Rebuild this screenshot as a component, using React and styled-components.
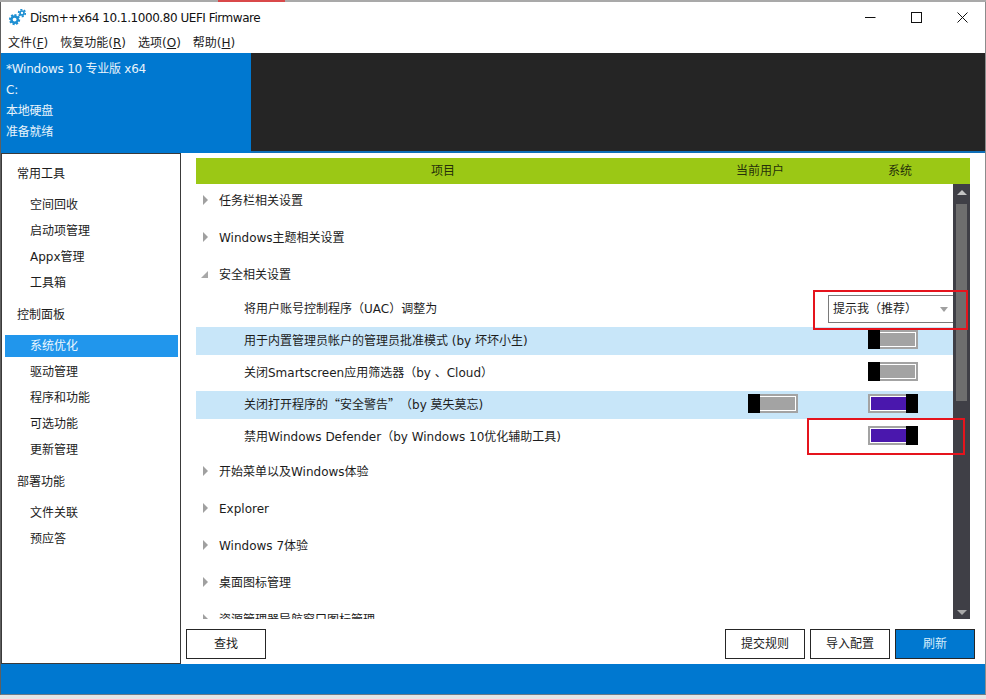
import React from "react";
import styled, { createGlobalStyle } from "styled-components";

const GlobalStyle = createGlobalStyle`
  html, body {
    margin: 0;
    padding: 0;
    background: #e6e6e6;
    overflow: hidden;
  }
`;

const fontStack = `"DejaVu Sans", "Noto Sans CJK SC", sans-serif`;

const Page = styled.div`
  width: 986px;
  height: 699px;
  display: flex;
  flex-direction: column;
  font-family: ${fontStack};
  font-size: 12px;
  color: #1c1c1c;
  box-sizing: border-box;
`;

const TopStrip = styled.div`
  height: 2px;
  background: #a9a9a9;
  display: flex;
  flex-shrink: 0;
  span {
    width: 67px;
    margin-left: 218px;
    background: #d9484a;
  }
`;

const Window = styled.div`
  height: 693px;
  display: flex;
  flex-direction: column;
  background: #fff;
  border-left: 1px solid #5f5f5f;
  border-right: 1px solid #8c8c8c;
  border-bottom: 1px solid #6c7c88;
  box-sizing: border-box;
`;

const TitleBar = styled.div`
  height: 28px;
  display: flex;
  align-items: center;
  padding: 3px 0 0 8px;
  box-sizing: border-box;
  flex-shrink: 0;
`;

const TitleText = styled.div`
  margin-left: 4px;
  letter-spacing: -0.45px;
  color: #111;
`;

const WinButtons = styled.div`
  margin-left: auto;
  display: flex;
  align-items: center;
`;

const WinButton = styled.div`
  width: 46px;
  height: 25px;
  display: flex;
  align-items: center;
  justify-content: center;
`;

const MenuBar = styled.div`
  height: 23px;
  display: flex;
  align-items: center;
  gap: 12px;
  padding-left: 7px;
  flex-shrink: 0;
  u {
    text-underline-offset: 1px;
  }
`;

const Header = styled.div`
  height: 100px;
  display: flex;
  flex-shrink: 0;
  background: #252525;
  border-bottom: 2px solid #0f6fb8;
  box-sizing: border-box;
`;

const Info = styled.div`
  width: 250px;
  margin-bottom: -2px;
  background: #0078d0;
  color: #e8f3fb;
  padding: 6px 0 0 5px;
  box-sizing: border-box;
  letter-spacing: -0.25px;
  div {
    height: 21px;
    line-height: 21px;
  }
`;

const Body = styled.div`
  flex: 1;
  display: flex;
  min-height: 0;
`;

const Sidebar = styled.nav`
  width: 180px;
  flex-shrink: 0;
  background: #fff;
  border: 1px solid #3a3a3a;
  box-sizing: border-box;
  padding: 7px 2px 0 3px;
`;

const NavSection = styled.div`
  display: flex;
  flex-direction: column;
`;

const NavGroup = styled.div`
  height: 26px;
  line-height: 26px;
  padding-left: 12px;
  margin: ${(p) => (p.$first ? "0" : "6px")} 0 5px;
`;

const NavItem = styled.div`
  height: ${(p) => (p.$active ? "22px" : "26px")};
  line-height: ${(p) => (p.$active ? "22px" : "26px")};
  margin: ${(p) => (p.$active ? "2px 0" : "0")};
  padding-left: 25px;
  background: ${(p) => (p.$active ? "#2196ec" : "transparent")};
  color: ${(p) => (p.$active ? "#eaf6ff" : "#1c1c1c")};
`;

const Main = styled.main`
  flex: 1;
  min-width: 0;
  display: flex;
  flex-direction: column;
  padding: 5px 10px 5px 5px;
`;

const TableHead = styled.div`
  height: 26px;
  margin: 0 5px 0 10px;
  display: grid;
  grid-template-columns: 494px 140px 140px;
  background: #9bc815;
  color: #26300a;
  flex-shrink: 0;
  line-height: 26px;
  text-align: center;
`;

const ListWrap = styled.div`
  height: 435px;
  margin: 0 5px 0 10px;
  display: flex;
  flex-shrink: 0;
  overflow: hidden;
`;

const Tree = styled.div`
  flex: 1;
  min-width: 0;
`;

const Group = styled.div`
  height: 32px;
  margin-bottom: 5px;
  display: flex;
  align-items: center;
`;

const GroupLabel = styled.span`
  line-height: 30px;
  margin-top: 2px;
`;

const Caret = styled.span`
  width: 0;
  height: 0;
  margin-left: ${(p) => (p.$open ? "5px" : "7px")};
  margin-right: 11px;
  border-style: solid;
  ${(p) =>
    p.$open
      ? `border-width: 0 0 7px 7px; border-color: transparent transparent #a8a8a8 transparent;`
      : `border-width: 5px 0 5px 5px; border-color: transparent transparent transparent #a0a0a0;`}
`;

const Row = styled.div`
  height: 28px;
  margin-bottom: 4px;
  padding: 0 35px 0 48px;
  display: grid;
  grid-template-columns: 1fr 50px 50px;
  column-gap: 70px;
  align-items: center;
  background: ${(p) => (p.$shaded ? "#c8e6f9" : "transparent")};
`;

const RowLabel = styled.div`
  margin-bottom: 3px;
  white-space: nowrap;
`;

const Quoted = styled.span`
  font-family: "Noto Sans CJK SC", sans-serif;
  padding-right: 6px;
`;

const Toggle = styled.div`
  position: relative;
  grid-column: ${(p) => p.$col};
  grid-row: 1;
  height: 19px;
  margin-bottom: 3px;
  box-sizing: border-box;
  border: 2px solid #a3a3a3;
  box-shadow: inset 0 0 0 1px #fff;
  background: ${(p) => (p.$on ? "#4a17ad" : "#a3a3a3")};
  &::after {
    content: "";
    position: absolute;
    top: -2px;
    ${(p) => (p.$on ? "right: -2px;" : "left: -2px;")}
    width: 12px;
    height: 19px;
    background: #000;
  }
`;

const Combo = styled.div`
  grid-column: 2 / -1;
  justify-self: end;
  width: 125px;
  height: 28px;
  margin-right: -35px;
  box-sizing: border-box;
  border: 1px solid #7a7a7a;
  border-right: 0;
  background: #fff;
  display: flex;
  align-items: center;
  justify-content: space-between;
  padding: 0 5px 3px 4px;
  i {
    width: 0;
    height: 0;
    margin-top: 3px;
    border-style: solid;
    border-width: 5px 4px 0 4px;
    border-color: #a0a0a0 transparent transparent transparent;
  }
`;

const Scrollbar = styled.div`
  width: 17px;
  flex-shrink: 0;
  background: #3f3f46;
  display: flex;
  flex-direction: column;
  align-items: center;
  padding-top: 6px;
  box-sizing: border-box;
`;

const ScrollUp = styled.i`
  width: 0;
  height: 0;
  border-style: solid;
  border-width: 0 5px 5px 5px;
  border-color: transparent transparent #c4c4c4 transparent;
`;

const ScrollDown = styled.i`
  width: 0;
  height: 0;
  margin-top: auto;
  margin-bottom: 4px;
  border-style: solid;
  border-width: 5px 5px 0 5px;
  border-color: #a8a8a8 transparent transparent transparent;
`;

const Thumb = styled.div`
  width: 11px;
  height: 197px;
  margin-top: 9px;
  background: #6e6e6e;
`;

const Actions = styled.div`
  margin-top: 10px;
  display: flex;
  gap: 5px;
  flex-shrink: 0;
`;

const Button = styled.div`
  width: 80px;
  height: 30px;
  line-height: 28px;
  box-sizing: border-box;
  text-align: center;
  border: 1px solid #262626;
  background: ${(p) => (p.$primary ? "#0078d0" : "#fff")};
  color: ${(p) => (p.$primary ? "#d8edfb" : "#1c1c1c")};
  &:first-child {
    margin-right: auto;
  }
`;

const Footer = styled.div`
  height: 30px;
  background: #0078d0;
  flex-shrink: 0;
`;

const Mark = styled.div`
  position: absolute;
  left: ${(p) => p.$x}px;
  top: ${(p) => p.$y}px;
  width: ${(p) => p.$w}px;
  height: ${(p) => p.$h}px;
  box-sizing: border-box;
  border: 2px solid #e5141d;
  pointer-events: none;
`;

const Gear = ({ cx, cy, r, w }) => (
  <g fill="none">
    <circle cx={cx} cy={cy} r={r + 1} stroke="#1e8fd2" strokeWidth={w} strokeDasharray="2 1.5" />
    <circle cx={cx} cy={cy} r={r - 0.4} stroke="#1e8fd2" strokeWidth={r * 0.7} />
  </g>
);

const AppIcon = () => (
  <svg width="17" height="17" viewBox="0 0 17 17">
    <Gear cx={5.6} cy={10.6} r={3.6} w={2} />
    <Gear cx={13} cy={4} r={2.4} w={1.6} />
  </svg>
);

const groupsTop = ["任务栏相关设置", "Windows主题相关设置"];
const groupsBottom = ["开始菜单以及Windows体验", "Explorer", "Windows 7体验", "桌面图标管理", "资源管理器导航窗口图标管理"];

const nav = [
  { title: "常用工具", items: ["空间回收", "启动项管理", "Appx管理", "工具箱"] },
  { title: "控制面板", items: ["系统优化", "驱动管理", "程序和功能", "可选功能", "更新管理"] },
  { title: "部署功能", items: ["文件关联", "预应答"] },
];

export default function App() {
  return (
    <Page>
      <GlobalStyle />
      <TopStrip>
        <span />
      </TopStrip>
      <Window>
        <TitleBar>
          <AppIcon />
          <TitleText>Dism++x64 10.1.1000.80 UEFI Firmware</TitleText>
          <WinButtons>
            <WinButton>
              <svg width="11" height="11" viewBox="0 0 11 11">
                <path d="M0 5.5h10.5" stroke="#111" strokeWidth="1" />
              </svg>
            </WinButton>
            <WinButton>
              <svg width="11" height="11" viewBox="0 0 11 11">
                <rect x="0.5" y="0.5" width="10" height="10" fill="none" stroke="#111" />
              </svg>
            </WinButton>
            <WinButton>
              <svg width="11" height="11" viewBox="0 0 11 11">
                <path d="M0.5 0.5l10 10M10.5 0.5l-10 10" stroke="#111" strokeWidth="1" />
              </svg>
            </WinButton>
          </WinButtons>
        </TitleBar>
        <MenuBar>
          <span>文件(<u>F</u>)</span>
          <span>恢复功能(<u>R</u>)</span>
          <span>选项(<u>O</u>)</span>
          <span>帮助(<u>H</u>)</span>
        </MenuBar>
        <Header>
          <Info>
            <div>*Windows 10 专业版 x64</div>
            <div>C:</div>
            <div>本地硬盘</div>
            <div>准备就绪</div>
          </Info>
        </Header>
        <Body>
          <Sidebar>
            {nav.map((g, i) => (
              <NavSection key={g.title}>
                <NavGroup $first={i === 0}>{g.title}</NavGroup>
                {g.items.map((t) => (
                  <NavItem key={t} $active={t === "系统优化"}>
                    {t}
                  </NavItem>
                ))}
              </NavSection>
            ))}
          </Sidebar>
          <Main>
            <TableHead>
              <div>项目</div>
              <div>当前用户</div>
              <div>系统</div>
            </TableHead>
            <ListWrap>
              <Tree>
                {groupsTop.map((t) => (
                  <Group key={t}>
                    <Caret />
                    <GroupLabel>{t}</GroupLabel>
                  </Group>
                ))}
                <Group>
                  <Caret $open />
                  <GroupLabel>安全相关设置</GroupLabel>
                </Group>
                <Row>
                  <RowLabel>将用户账号控制程序（UAC）调整为</RowLabel>
                  <Combo>
                    提示我（推荐）
                    <i />
                  </Combo>
                </Row>
                <Row $shaded>
                  <RowLabel>用于内置管理员帐户的管理员批准模式 (by 坏坏小生)</RowLabel>
                  <Toggle $col={3} />
                </Row>
                <Row>
                  <RowLabel>关闭Smartscreen应用筛选器（by 、Cloud）</RowLabel>
                  <Toggle $col={3} />
                </Row>
                <Row $shaded>
                  <RowLabel>
                    关闭打开程序的<Quoted>“安全警告”</Quoted>（by 莫失莫忘)
                  </RowLabel>
                  <Toggle $col={2} />
                  <Toggle $col={3} $on />
                </Row>
                <Row>
                  <RowLabel>禁用Windows Defender（by Windows 10优化辅助工具)</RowLabel>
                  <Toggle $col={3} $on />
                </Row>
                {groupsBottom.map((t) => (
                  <Group key={t}>
                    <Caret />
                    <GroupLabel>{t}</GroupLabel>
                  </Group>
                ))}
              </Tree>
              <Scrollbar>
                <ScrollUp />
                <Thumb />
                <ScrollDown />
              </Scrollbar>
            </ListWrap>
            <Actions>
              <Button>查找</Button>
              <Button>提交规则</Button>
              <Button>导入配置</Button>
              <Button $primary>刷新</Button>
            </Actions>
          </Main>
        </Body>
        <Footer />
      </Window>
      <Mark $x={813} $y={290} $w={155} $h={40} />
      <Mark $x={807} $y={418} $w={158} $h={37} />
    </Page>
  );
}
